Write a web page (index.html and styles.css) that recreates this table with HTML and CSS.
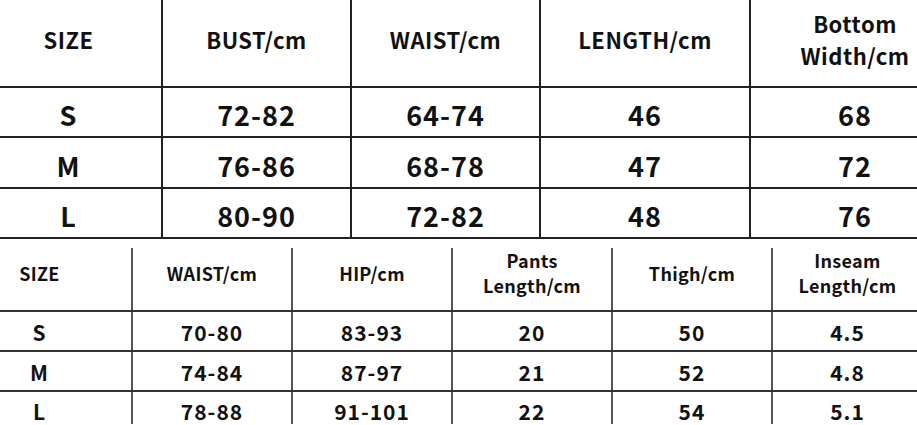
FILE: index.html
```html
<!DOCTYPE html>
<html>
<head>
<meta charset="utf-8">
<link rel="stylesheet" href="styles.css">
</head>
<body>
<div class="page">
<table class="chart top">
  <colgroup>
    <col class="t1"><col class="t2"><col class="t3"><col class="t4"><col class="t5">
  </colgroup>
  <tr class="head">
    <th>SIZE</th><th>BUST/cm</th><th>WAIST/cm</th><th>LENGTH/cm</th><th>Bottom<br>Width/cm</th>
  </tr>
  <tr class="r1"><td>S</td><td>72-82</td><td>64-74</td><td>46</td><td>68</td></tr>
  <tr class="r2"><td>M</td><td>76-86</td><td>68-78</td><td>47</td><td>72</td></tr>
  <tr class="r3"><td>L</td><td>80-90</td><td>72-82</td><td>48</td><td>76</td></tr>
</table>
<table class="chart bottom">
  <colgroup>
    <col class="b1"><col class="b2"><col class="b3"><col class="b4"><col class="b5"><col class="b6">
  </colgroup>
  <tr class="head">
    <th>SIZE</th><th>WAIST/cm</th><th>HIP/cm</th><th>Pants<br>Length/cm</th><th>Thigh/cm</th><th>Inseam<br>Length/cm</th>
  </tr>
  <tr><td>S</td><td>70-80</td><td>83-93</td><td>20</td><td>50</td><td>4.5</td></tr>
  <tr><td>M</td><td>74-84</td><td>87-97</td><td>21</td><td>52</td><td>4.8</td></tr>
  <tr class="last"><td>L</td><td>78-88</td><td>91-101</td><td>22</td><td>54</td><td>5.1</td></tr>
</table>
</div>
</body>
</html>
```
FILE: styles.css
```css
html, body {
  margin: 0;
  padding: 0;
  background: #fff;
  overflow: hidden;
}
.page {
  width: 917px;
  height: 425px;
  overflow: hidden;
  font-family: "Noto Sans CJK SC", "Noto Sans", sans-serif;
  font-weight: 700;
  color: #111;
}
.chart {
  border-collapse: collapse;
  table-layout: fixed;
}
.chart th, .chart td {
  padding: 0;
  text-align: center;
  vertical-align: middle;
  font-weight: 700;
}
/* top table */
.top {
  margin-left: -24px;
  margin-top: -9px;
  width: 983px;
}
.t1 { width: 186px; }
.t2 { width: 189px; }
.t3 { width: 189px; }
.t4 { width: 210px; }
.t5 { width: 209px; }
.top th, .top td {
  border: 2px solid #222;
  border-top: none;
}
.top tr > :first-child { border-left: none; }
.top tr > :last-child { border-right: none; }
.top th {
  height: 95px;
  font-size: 22px;
  letter-spacing: 0.5px;
  line-height: 32px;
}
.top td {
  font-size: 27px;
  line-height: 30px;
  padding-top: 6px;
  letter-spacing: 1px;
}
.top .r1 td { height: 42px; }
.top .r2 td { height: 43px; }
.top .r3 td { height: 42px; }
/* bottom table */
.bottom {
  margin-left: -52px;
  margin-top: 9px;
  width: 974px;
}
.b1 { width: 184px; }
.b2 { width: 160px; }
.b3 { width: 160px; }
.b4 { width: 160px; }
.b5 { width: 160px; }
.b6 { width: 150px; }
.bottom th, .bottom td {
  border-left: 2px solid #555;
  border-right: 2px solid #555;
  border-bottom: 2px solid #333;
}
.bottom tr > :first-child { border-left: none; }
.bottom tr > :last-child { border-right: none; }
.bottom th {
  height: 48px;
  padding-bottom: 12px;
  font-size: 18px;
  letter-spacing: 0.3px;
  line-height: 25px;
}
.bottom td {
  height: 36px;
  padding-top: 2px;
  font-size: 21px;
  line-height: 20px;
  letter-spacing: 1px;
}
.bottom .last td {
  height: 23px;
  padding-top: 9px;
  vertical-align: top;
  border-bottom: none;
}
```
